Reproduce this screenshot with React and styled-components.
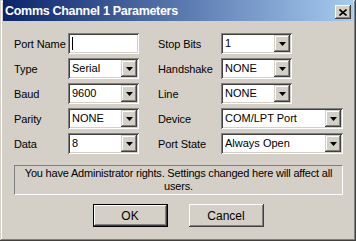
import React from "react";
import styled, { createGlobalStyle } from "styled-components";

const GlobalStyle = createGlobalStyle`
  html, body {
    margin: 0;
    padding: 0;
    background: #d4d0c8;
  }
  body {
    font-family: "Liberation Sans", Arial, sans-serif;
    font-size: 11px;
    color: #000;
  }
`;

const Window = styled.div`
  width: 356px;
  height: 241px;
  box-sizing: border-box;
  padding: 0 3px 3px 3px;
  background: #d4d0c8;
  box-shadow: inset -1px -1px #404040, inset 1px 1px #d4d0c8,
    inset -2px -2px #808080, inset 2px 2px #ffffff;
  display: flex;
  flex-direction: column;
`;

const TitleBar = styled.div`
  height: 21px;
  display: flex;
  align-items: flex-start;
  justify-content: space-between;
  background: linear-gradient(to right, #0a246a, #a6caf0);
  padding: 0 2px 0 2px;
`;

const TitleText = styled.div`
  color: #fff;
  font-weight: bold;
  font-size: 12.5px;
  letter-spacing: -0.3px;
  line-height: 13px;
  padding-top: 5px;
  white-space: nowrap;
`;

const CloseButton = styled.div`
  width: 16px;
  height: 14px;
  margin-top: 5px;
  background: #d4d0c8;
  box-shadow: inset -1px -1px #404040, inset 1px 1px #ffffff,
    inset -2px -2px #808080, inset 2px 2px #d4d0c8;
  display: flex;
  align-items: center;
  justify-content: center;
`;

const Body = styled.div`
  padding: 12px 0 0 11px;
  display: flex;
  flex-direction: column;
`;

const Form = styled.div`
  display: flex;
  gap: 19px;
`;

const Column = styled.div`
  display: flex;
  flex-direction: column;
  gap: 4px;
`;

const Row = styled.div`
  display: flex;
  align-items: center;
  height: 21px;
`;

const Label = styled.div`
  width: ${({ $w }) => $w}px;
  white-space: nowrap;
  letter-spacing: -0.1px;
`;

const Field = styled.div`
  width: ${({ $w }) => $w || 71}px;
  height: 21px;
  box-sizing: border-box;
  background: #fff;
  box-shadow: inset 1px 1px #808080, inset -1px -1px #ffffff,
    inset 2px 2px #404040, inset -2px -2px #d4d0c8;
  display: flex;
  align-items: center;
  padding: 2px 2px 2px 4px;
`;

const Value = styled.div`
  flex: 1;
  white-space: nowrap;
  overflow: hidden;
  line-height: 17px;
`;

const Caret = styled.div`
  width: 1px;
  height: 13px;
  background: #000;
`;

const DropButton = styled.div`
  width: 16px;
  height: 17px;
  background: #d4d0c8;
  box-shadow: inset -1px -1px #404040, inset 1px 1px #d4d0c8,
    inset -2px -2px #808080, inset 2px 2px #ffffff;
  display: flex;
  align-items: center;
  justify-content: center;
`;

const Notice = styled.div`
  margin: 11px 0 0 0;
  width: 329px;
  height: 30px;
  box-sizing: border-box;
  border: 1px solid;
  border-color: #808080 #ffffff #ffffff #808080;
  text-align: center;
  line-height: 13px;
  padding-top: 1px;
  letter-spacing: -0.2px;
  white-space: nowrap;
`;

const Buttons = styled.div`
  display: flex;
  justify-content: center;
  gap: 21px;
  margin: 9px 0 0 -11px;
`;

const Button = styled.div`
  width: 75px;
  height: 23px;
  box-sizing: border-box;
  background: #d4d0c8;
  display: flex;
  align-items: center;
  justify-content: center;
  font-size: 12px;
  box-shadow: ${({ $default }) =>
    $default
      ? "inset 0 0 0 1px #000, inset -2px -2px #404040, inset 2px 2px #ffffff, inset -3px -3px #808080"
      : "inset -1px -1px #404040, inset 1px 1px #ffffff, inset -2px -2px #808080, inset 2px 2px #d4d0c8"};
`;

const Arrow = () => (
  <svg width="7" height="4" viewBox="0 0 7 4">
    <path d="M0 0H7L3.5 4Z" fill="#000" />
  </svg>
);

const CloseX = () => (
  <svg width="8" height="7" viewBox="0 0 8 7">
    <path d="M0.5 0.5L7.5 6.5M7.5 0.5L0.5 6.5" stroke="#000" strokeWidth="1.6" />
  </svg>
);

const Combo = ({ value, w }) => (
  <Field $w={w}>
    <Value>{value}</Value>
    <DropButton>
      <Arrow />
    </DropButton>
  </Field>
);

const left = [
  ["Type", "Serial"],
  ["Baud", "9600"],
  ["Parity", "NONE"],
  ["Data", "8"],
];

const right = [
  ["Stop Bits", "1"],
  ["Handshake", "NONE"],
  ["Line", "NONE"],
  ["Device", "COM/LPT Port", 122],
  ["Port State", "Always Open", 122],
];

export default function App() {
  return (
    <>
      <GlobalStyle />
      <Window>
        <TitleBar>
          <TitleText>Comms Channel 1 Parameters</TitleText>
          <CloseButton>
            <CloseX />
          </CloseButton>
        </TitleBar>
        <Body>
          <Form>
            <Column>
              <Row>
                <Label $w={54}>Port Name</Label>
                <Field>
                  <Caret />
                </Field>
              </Row>
              {left.map(([label, value]) => (
                <Row key={label}>
                  <Label $w={54}>{label}</Label>
                  <Combo value={value} />
                </Row>
              ))}
            </Column>
            <Column>
              {right.map(([label, value, w]) => (
                <Row key={label}>
                  <Label $w={63}>{label}</Label>
                  <Combo value={value} w={w} />
                </Row>
              ))}
            </Column>
          </Form>
          <Notice>
            You have Administrator rights. Settings changed here will affect all
            <br />
            users.
          </Notice>
          <Buttons>
            <Button $default>OK</Button>
            <Button>Cancel</Button>
          </Buttons>
        </Body>
      </Window>
    </>
  );
}
